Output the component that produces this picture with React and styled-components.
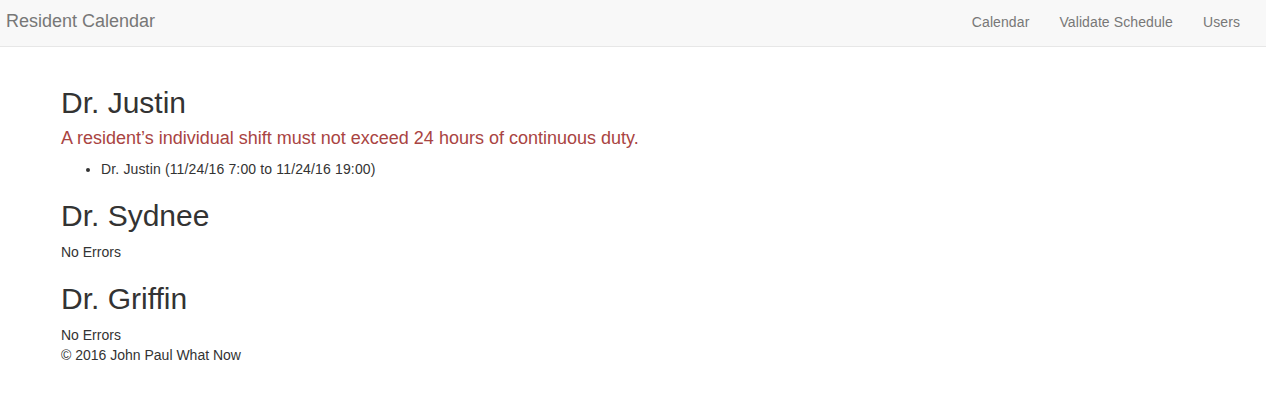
import React from "react";
import styled, { createGlobalStyle } from "styled-components";

const Global = createGlobalStyle`
  html, body { margin: 0; padding: 0; background: #fff; }
  body {
    font-family: "Liberation Sans", Arial, Helvetica, sans-serif;
    font-size: 14px;
    line-height: 1.42857143;
    color: #333;
  }
  * { box-sizing: border-box; }
`;

const Navbar = styled.nav`
  display: flex;
  align-items: flex-start;
  justify-content: space-between;
  height: 47px;
  background: #f8f8f8;
  border-bottom: 1px solid #e7e7e7;
  padding: 0 11px 0 6px;
`;

const Brand = styled.a`
  font-size: 18px;
  line-height: 20px;
  padding-top: 11px;
  color: #777;
  text-decoration: none;
`;

const NavList = styled.ul`
  display: flex;
  list-style: none;
  margin: 0;
  padding: 0;
`;

const NavLink = styled.a`
  display: block;
  padding: 12px 15px 14px;
  line-height: 20px;
  font-size: 14px;
  color: #777;
  text-decoration: none;
  letter-spacing: 0.1px;
`;

const Main = styled.main`
  padding: 19px 61px 0;
  display: flow-root;
`;

const ResidentName = styled.h2`
  font-family: inherit;
  font-size: 30px;
  font-weight: 500;
  line-height: 1.1;
  color: #333;
  margin: 20px 0 10px;
`;

const RuleError = styled.h4`
  font-size: 18px;
  font-weight: 500;
  line-height: 1.1;
  color: #a94442;
  margin: 10px 0 10px;
`;

const ShiftList = styled.ul`
  margin: 0 0 10px;
  padding-left: 40px;
  font-size: 14px;
  line-height: 20px;
  letter-spacing: 0.15px;
`;

const Plain = styled.div`
  font-size: 14px;
  line-height: 20px;
`;

const data = [
  {
    name: "Dr. Justin",
    errors: [
      {
        rule: "A resident\u2019s individual shift must not exceed 24 hours of continuous duty.",
        shifts: ["Dr. Justin (11/24/16 7:00 to 11/24/16 19:00)"],
      },
    ],
  },
  { name: "Dr. Sydnee", errors: [] },
  { name: "Dr. Griffin", errors: [] },
];

export default function App() {
  return (
    <>
      <Global />
      <Navbar>
        <Brand href="#">Resident Calendar</Brand>
        <NavList>
          <li><NavLink href="#">Calendar</NavLink></li>
          <li><NavLink href="#">Validate Schedule</NavLink></li>
          <li><NavLink href="#">Users</NavLink></li>
        </NavList>
      </Navbar>
      <Main>
        {data.map((r) => (
          <section key={r.name}>
            <ResidentName>{r.name}</ResidentName>
            {r.errors.length === 0 ? (
              <Plain>No Errors</Plain>
            ) : (
              r.errors.map((e) => (
                <div key={e.rule}>
                  <RuleError>{e.rule}</RuleError>
                  <ShiftList>
                    {e.shifts.map((s) => (
                      <li key={s}>{s}</li>
                    ))}
                  </ShiftList>
                </div>
              ))
            )}
          </section>
        ))}
        <Plain>© 2016 John Paul What Now</Plain>
      </Main>
    </>
  );
}
